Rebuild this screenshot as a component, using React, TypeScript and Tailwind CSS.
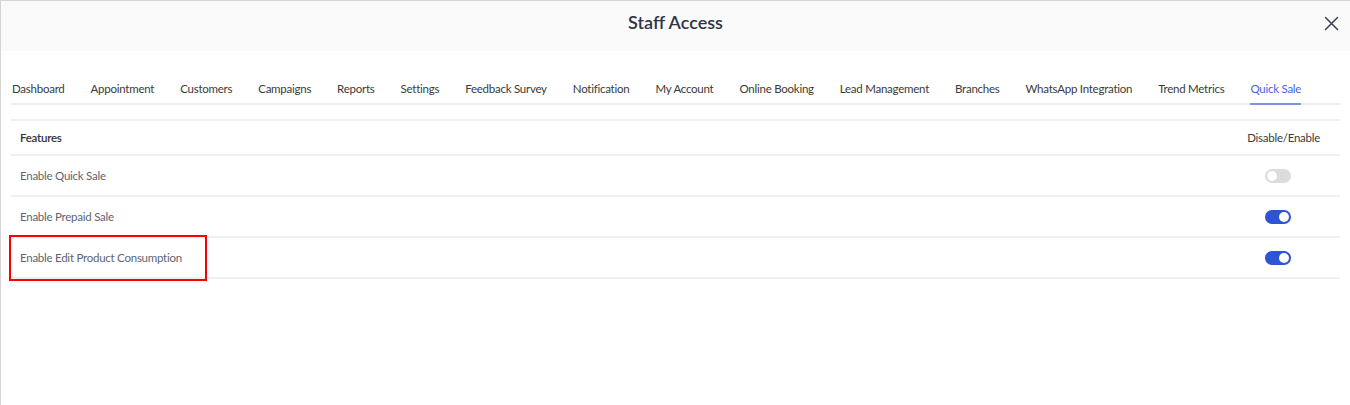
import React from "react";

const tabs = [
  "Dashboard",
  "Appointment",
  "Customers",
  "Campaigns",
  "Reports",
  "Settings",
  "Feedback Survey",
  "Notification",
  "My Account",
  "Online Booking",
  "Lead Management",
  "Branches",
  "WhatsApp Integration",
  "Trend Metrics",
  "Quick Sale",
];

const rows = [
  { label: "Enable Quick Sale", on: false },
  { label: "Enable Prepaid Sale", on: true },
  { label: "Enable Edit Product Consumption", on: true, boxed: true },
];

function Toggle({ on }: { on: boolean }) {
  return (
    <div
      className={
        on
          ? "w-[26px] h-[14px] rounded-full bg-[#2c54d4] flex items-center justify-end pr-[2px]"
          : "w-[26px] h-[14px] rounded-full bg-[#dcdcdc] flex items-center justify-start pl-[2px]"
      }
    >
      <div className="w-[10px] h-[10px] rounded-full bg-white" />
    </div>
  );
}

export default function App() {
  return (
    <div
      className="w-[1350px] h-[405px] bg-white border-l border-t border-[#d4d4d4] overflow-hidden"
      style={{ fontFamily: "Lato, 'Open Sans', sans-serif" }}
    >
      <div className="h-[50px] bg-[#fafafa] relative flex items-start justify-center pt-[9px]">
        <h1 className="text-[18px] leading-[24px] font-semibold text-[#2f3445]">Staff Access</h1>
        <button className="absolute right-[11px] top-[14px] w-[16px] h-[16px] flex items-center justify-center">
          <svg width="15" height="15" viewBox="0 0 15 15" fill="none">
            <path d="M1.5 1.5L13.5 13.5M13.5 1.5L1.5 13.5" stroke="#3b404c" strokeWidth="1.5" strokeLinecap="round" />
          </svg>
        </button>
      </div>

      <div className="mx-[10px] mt-[30px] flex gap-[26px] border-b-2 border-[#ededed]">
        {tabs.map((t, i) => (
          <div
            key={t}
            className={
              i === tabs.length - 1
                ? "text-[11.5px] tracking-[-0.25px] leading-[16px] pb-[6px] -mb-[2px] border-b-2 border-[#7d92e6] text-[#4a64d8] whitespace-nowrap"
                : "text-[11.5px] tracking-[-0.25px] leading-[16px] pb-[6px] -mb-[2px] border-b-2 border-transparent text-[#3a3a3a] whitespace-nowrap"
            }
            style={i === 0 ? { marginLeft: 1 } : undefined}
          >
            {t}
          </div>
        ))}
      </div>

      <div className="mx-[10px] mt-[14px] border-t-2 border-[#efefef]">
        <div className="h-[35px] flex items-center justify-between pl-[9px] pr-[20px] border-b-2 border-[#efefef]">
          <span className="text-[11.5px] tracking-[-0.25px] font-semibold text-[#333]">Features</span>
          <span className="text-[11.5px] tracking-[-0.25px] text-[#3c3c3c]">Disable/Enable</span>
        </div>
        {rows.map((r) => (
          <div
            key={r.label}
            className="relative h-[41px] flex items-center justify-between pl-[9px] pr-[49px] border-b-2 border-[#efefef]"
          >
            <span className="text-[11.5px] tracking-[-0.25px] text-[#61646f]">{r.label}</span>
            <Toggle on={r.on} />
            {r.boxed && (
              <div className="absolute left-[-2px] top-[-3px] w-[198px] h-[46px] border-2 border-[#ff0000]" />
            )}
          </div>
        ))}
      </div>
    </div>
  );
}
